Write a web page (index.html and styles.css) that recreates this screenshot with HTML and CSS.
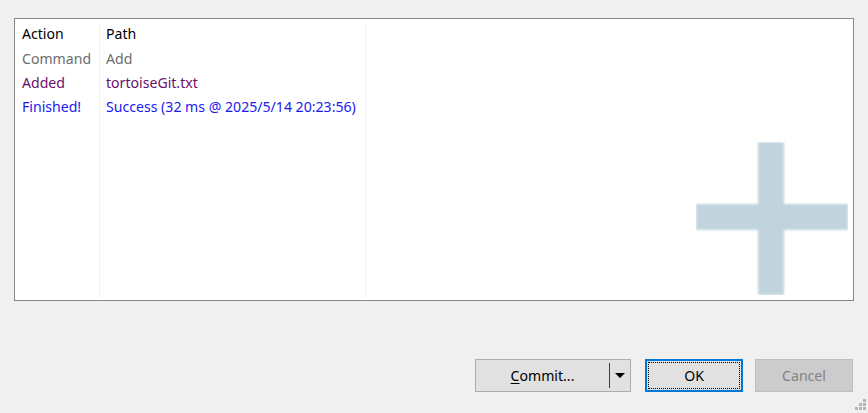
FILE: index.html
```html
<!DOCTYPE html>
<html>
<head>
<meta charset="utf-8">
<link rel="stylesheet" href="styles.css">
</head>
<body>
<div class="dialog">
  <div class="listbox">
    <div class="cols">
      <div class="col c1">
        <div class="cell head">Action</div>
        <div class="cell cmd">Command</div>
        <div class="cell add">Added</div>
        <div class="cell fin">Finished!</div>
      </div>
      <div class="col c2">
        <div class="cell head">Path</div>
        <div class="cell cmd">Add</div>
        <div class="cell add">tortoiseGit.txt</div>
        <div class="cell fin">Success (32 ms @ 2025/5/14 20:23:56)</div>
      </div>
      <div class="col c3"></div>
    </div>
    <svg class="watermark" width="152" height="153" viewBox="0 0 152 153">
      <defs><filter id="b" x="-5%" y="-5%" width="110%" height="110%"><feGaussianBlur stdDeviation="0.8"/></filter></defs>
      <g fill="#c1d4de" filter="url(#b)">
        <rect x="62" y="0" width="26" height="153"/>
        <rect x="0" y="62" width="152" height="26"/>
      </g>
    </svg>
  </div>
  <div class="buttons">
    <div class="btn split"><span class="label"><u>C</u>ommit...</span><span class="sep"></span><span class="arrow"></span></div>
    <div class="btn ok"><span class="focus">OK</span></div>
    <div class="btn cancel">Cancel</div>
  </div>
  <div class="grip">
    <i style="grid-area:1/3"></i>
    <i style="grid-area:2/2"></i><i style="grid-area:2/3"></i>
    <i style="grid-area:3/1"></i><i style="grid-area:3/2"></i><i style="grid-area:3/3"></i>
  </div>
</div>
</body>
</html>
```
FILE: styles.css
```css
html, body { margin: 0; padding: 0; }
body {
  background: #f0f0f0;
  width: 868px;
  height: 413px;
  overflow: hidden;
  font-family: "Noto Sans", "Open Sans", sans-serif;
  font-size: 14.1px;
}
.dialog {
  position: relative;
  width: 868px;
  height: 413px;
  padding: 18px 14px 0 14px;
  box-sizing: border-box;
}
.listbox {
  position: relative;
  height: 283px;
  border: 1px solid #828790;
  background: #fff;
  box-sizing: border-box;
  overflow: hidden;
}
.cols {
  display: flex;
  height: 100%;
  padding-top: 3px;
  box-sizing: border-box;
}
.col {
  height: 276px;
  border-right: 1px solid #eef3f8;
}
.c1 { width: 85px; padding-left: 7px; box-sizing: border-box; }
.c2 { width: 266px; padding-left: 6px; box-sizing: border-box; }
.c3 { flex: 1; border-right: none; }
.cell {
  height: 24px;
  line-height: 24px;
  white-space: nowrap;
}
.head { color: #000; height: 25px; line-height: 24px; }
.cmd { color: #6d6d6d; }
.add { color: #6a0f6a; }
.fin { color: #1a1af0; }
.watermark {
  position: absolute;
  left: 681px;
  top: 123px;
}
.buttons {
  display: flex;
  justify-content: flex-end;
  margin-top: 58px;
  padding-right: 1px;
}
.btn {
  height: 33px;
  box-sizing: border-box;
  display: flex;
  align-items: center;
  justify-content: center;
  color: #000;
}
.split {
  width: 156px;
  background: #e1e1e1;
  border: 1px solid #adadad;
  position: relative;
  justify-content: flex-start;
  margin-right: 14px;
}
.split .label {
  width: 133px;
  text-align: center;
  box-sizing: border-box;
}
.split .label u { text-decoration-thickness: 1px; text-underline-offset: 2px; }
.split .sep {
  width: 1px;
  height: 25px;
  background: #3c3c3c;
}
.split .arrow {
  margin-left: 5px;
  width: 0; height: 0;
  border-left: 5px solid transparent;
  border-right: 5px solid transparent;
  border-top: 5px solid #000;
}
.ok {
  width: 98px;
  background: #e1e1e1;
  border: 2px solid #0078d7;
  padding: 1px;
  margin-right: 12px;
}
.ok .focus {
  width: 100%;
  height: 100%;
  border: 1px dotted #000;
  box-sizing: border-box;
  display: flex;
  align-items: center;
  justify-content: center;
}
.cancel {
  width: 98px;
  background: #cccccc;
  border: 1px solid #bfbfbf;
  color: #838383;
}
.grip {
  position: absolute;
  right: 2px;
  bottom: 3px;
  display: grid;
  grid-template-columns: repeat(3, 3px);
  grid-template-rows: repeat(3, 3px);
  gap: 1px;
}
.grip i { background: #b4b4b4; display: block; width: 3px; height: 3px; }
```
